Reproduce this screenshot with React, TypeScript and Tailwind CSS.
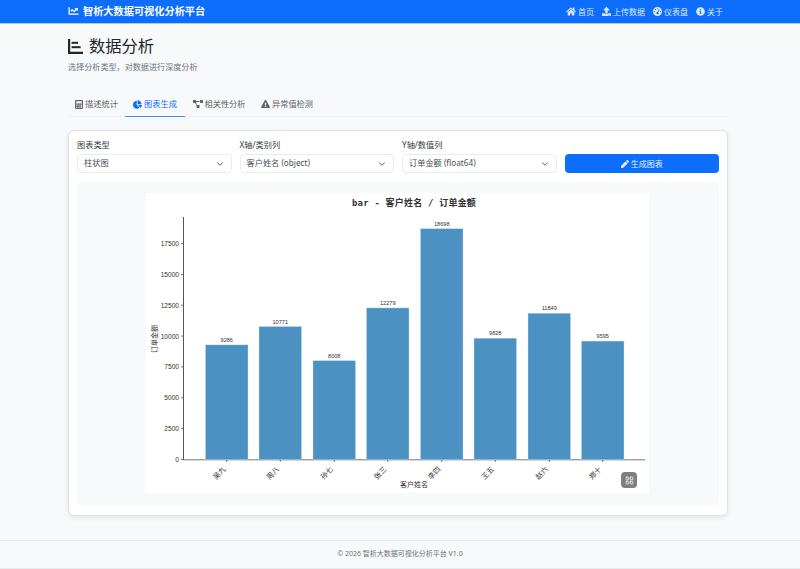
import { FaCalculator, FaChartPie, FaProjectDiagram, FaExclamationTriangle, FaHome, FaUpload, FaInfoCircle, FaPen, FaChartLine } from "react-icons/fa";
import { FaGaugeHigh } from "react-icons/fa6";
import { LuChevronDown, LuLayoutGrid } from "react-icons/lu";

const FONT = "font-['Noto_Sans','Noto_Sans_CJK_SC',sans-serif]";

const bars = [
  { name: "吴九", v: 9286, x: 205.5 },
  { name: "周八", v: 10771, x: 259 },
  { name: "孙七", v: 8008, x: 313 },
  { name: "张三", v: 12279, x: 366.5 },
  { name: "李四", v: 18698, x: 420.5 },
  { name: "王五", v: 9828, x: 474 },
  { name: "赵六", v: 11849, x: 528 },
  { name: "郑十", v: 9595, x: 581.5 },
];

const Y0 = 459.5;
const SCALE = (459.5 - 243.5) / 17500;

function Chart() {
  const ox = 146;
  const oy = 193;
  return (
    <svg width="503" height="300" viewBox={`${ox} ${oy} 503 300`} className="block bg-white">
      <text x="414" y="206" textAnchor="middle" fontSize="9" fontWeight="700" letterSpacing="0.2" fill="#333" fontFamily="'DejaVu Sans Mono','Noto Sans CJK SC',monospace">
        bar - 客户姓名 / 订单金额
      </text>
      <line x1="183.5" y1="217" x2="183.5" y2="460" stroke="#555" strokeWidth="1" />
      <line x1="183" y1="459.8" x2="645" y2="459.8" stroke="#777" strokeWidth="1" />
      {[0, 2500, 5000, 7500, 10000, 12500, 15000, 17500].map((t) => {
        const y = Y0 - t * SCALE;
        return (
          <g key={t}>
            <line x1="181" y1={y} x2="183" y2={y} stroke="#444" strokeWidth="0.7" />
            <text x="179" y={y + 2.5} textAnchor="end" fontSize="6.6" fill="#333" fontFamily="'Liberation Sans',sans-serif">
              {t}
            </text>
          </g>
        );
      })}
      <text transform="translate(157 339) rotate(-90)" textAnchor="middle" fontSize="7" fill="#333" fontFamily="'Noto Sans CJK SC',sans-serif">
        订单金额
      </text>
      {bars.map((b) => {
        const h = b.v * SCALE;
        const cx = b.x + 21.25;
        return (
          <g key={b.name}>
            <rect x={b.x} y={Y0 - h} width="42.5" height={h} fill="#4b92c3" stroke="#c3dbeb" strokeWidth="0.4" />
            <text x={cx} y={Y0 - h - 3} textAnchor="middle" fontSize="5.6" fill="#333" fontFamily="'Liberation Sans',sans-serif">
              {b.v}
            </text>
            <line x1={cx} y1="460" x2={cx} y2="462" stroke="#444" strokeWidth="0.7" />
            <text transform={`translate(${cx - 5.7} 474.8) rotate(-45)`} textAnchor="middle" fontSize="7.2" fill="#333" fontFamily="'Noto Sans CJK SC',sans-serif">
              {b.name}
            </text>
          </g>
        );
      })}
      <text x="414" y="487" textAnchor="middle" fontSize="7" fill="#333" fontFamily="'Noto Sans CJK SC',sans-serif">
        客户姓名
      </text>
    </svg>
  );
}

function Select({ label, value }: { label: string; value: string }) {
  return (
    <div className="flex flex-col">
      <div className="h-[23px] pt-[8px] text-[8.2px] leading-[12px] text-[#343a40]">{label}</div>
      <div className="h-[19px] flex items-center justify-between pl-[6px] pr-[6px] bg-white border border-[#e9ecef] rounded-[4px] text-[8.2px] text-[#495057]">
        <span>{value}</span>
        <LuChevronDown className="w-[10px] h-[10px] text-[#343a40]" />
      </div>
    </div>
  );
}

function Tab({ icon, label, active, width }: { icon: React.ReactNode; label: string; active?: boolean; width: string }) {
  return (
    <div className={`${width} h-[25px] flex items-center justify-center gap-[2px] text-[8.2px] border-b ${active ? "text-[#0d6efd] border-[#3d8bfd]" : "text-[#5c636a] border-transparent"}`}>
      {icon}
      <span>{label}</span>
    </div>
  );
}

function NavItem({ icon, label }: { icon: React.ReactNode; label: string }) {
  return (
    <div className="flex items-center gap-[2px] text-[8px] text-[#dbe8fd]">
      {icon}
      <span>{label}</span>
    </div>
  );
}

export default function App() {
  return (
    <div className={`${FONT} w-[800px] h-[569px] overflow-hidden bg-[#f8f9fa] flex flex-col`}>
      <header className="h-[24px] shrink-0 bg-[#0d6efd] border-b border-[#a9cdfb] flex items-center justify-between pl-[68px] pr-[77px]">
        <div className="flex items-center gap-[4px] text-white font-bold text-[10.2px]">
          <FaChartLine className="w-[11px] h-[10px]" />
          <span>智析大数据可视化分析平台</span>
        </div>
        <div className="flex items-center gap-[8px]">
          <NavItem icon={<FaHome className="w-[10px] h-[9px]" />} label="首页" />
          <NavItem icon={<FaUpload className="w-[9px] h-[9px]" />} label="上传数据" />
          <NavItem icon={<FaGaugeHigh className="w-[9px] h-[9px]" />} label="仪表盘" />
          <NavItem icon={<FaInfoCircle className="w-[9px] h-[9px]" />} label="关于" />
        </div>
      </header>

      <main className="flex-1 pl-[68px] pr-[72px] flex flex-col">
        <div className="h-[21px] mt-[12px] flex items-center gap-[6px] text-[16.3px] text-[#212529]">
          <svg width="15" height="15" viewBox="0 0 15 15" fill="#212529">
            <path d="M0 0h2.2v12.8H15V15H0z" />
            <rect x="3.6" y="2.8" width="6.4" height="2" />
            <rect x="3.6" y="7.2" width="9" height="2" />
          </svg>
          <span>数据分析</span>
        </div>
        <div className="mt-[2px] text-[8.1px] leading-[15px] text-[#6c757d]">选择分析类型，对数据进行深度分析</div>
        <div className="mt-[18px] flex border-b border-[#eff1f3] h-[25px]">
          <Tab width="w-[57px]" icon={<FaCalculator className="w-[8px] h-[9px]" />} label="描述统计" />
          <Tab width="w-[60px]" active icon={<FaChartPie className="w-[9px] h-[9px]" />} label="图表生成" />
          <Tab width="w-[68px]" icon={<FaProjectDiagram className="w-[10px] h-[8px]" />} label="相关性分析" />
          <Tab width="w-[68px]" icon={<FaExclamationTriangle className="w-[9px] h-[8px]" />} label="异常值检测" />
        </div>

        <div className="mt-[13px] h-[386px] bg-white border border-[#dee2e6] rounded-[6px] shadow-[0_2px_5px_rgba(0,0,0,0.08)] px-[8px] flex flex-col">
          <div className="grid grid-cols-4 gap-[8px]">
            <Select label="图表类型" value="柱状图" />
            <Select label="X轴/类别列" value="客户姓名 (object)" />
            <Select label="Y轴/数值列" value="订单金额 (float64)" />
            <div className="flex flex-col pt-[23px]">
              <div className="h-[19px] flex items-center justify-center gap-[2px] bg-[#0d6efd] rounded-[4px] text-[#e7effb] text-[8px]">
                <FaPen className="w-[8px] h-[8px]" />
                <span>生成图表</span>
              </div>
            </div>
          </div>
          <div className="relative mt-[9px] h-[323px] bg-[#f8f9fa] rounded-[4px] flex justify-center pt-[11px]">
            <div className="relative w-[503px] h-[300px] ml-[-1px]">
              <Chart />
              <div className="absolute right-[12px] bottom-[5px] w-[16px] h-[16px] rounded-[4px] bg-[#7f7f7f] flex items-center justify-center text-white">
                <LuLayoutGrid className="w-[9px] h-[9px]" />
              </div>
            </div>
          </div>
        </div>
      </main>

      <footer className="h-[29px] shrink-0 border-t border-[#e9ecef] border-b flex items-center justify-center text-[7px] text-[#6c757d]">
        © 2026 智析大数据可视化分析平台 V1.0
      </footer>
    </div>
  );
}
